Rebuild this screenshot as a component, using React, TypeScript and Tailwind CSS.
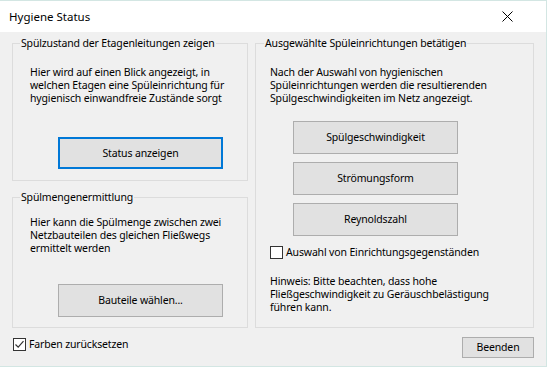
import React from "react";

const Btn = ({ label, focused, className }: { label: string; focused?: boolean; className?: string }) => (
  <button
    className={
      "flex items-center justify-center bg-[#e1e1e1] text-black " +
      (focused ? "border-2 border-[#0078d7] " : "border border-[#adadad] ") +
      (className ?? "")
    }
  >
    {label}
  </button>
);

const CheckBox = ({ checked, label }: { checked?: boolean; label: string }) => (
  <label className="flex items-center gap-[3px]">
    <span className="w-[13px] h-[13px] border border-[#333333] bg-white flex items-center justify-center">
      {checked && (
        <svg width="11" height="11" viewBox="0 0 11 11">
          <path d="M1.5 5.5 L4.2 8.2 L9.5 2.2" fill="none" stroke="#333333" strokeWidth="1.2" />
        </svg>
      )}
    </span>
    <span>{label}</span>
  </label>
);

export default function App() {
  return (
    <div
      className="w-[547px] h-[367px] flex flex-col border-t border-r border-b border-[#d3e6e3] text-[10.5px] leading-[13px] tracking-[-0.15px] text-black"
      style={{ fontFamily: '"Segoe UI", "Noto Sans", sans-serif' }}
    >
      {/* title bar */}
      <div className="h-[31px] bg-white flex items-center justify-between pl-[9px] pr-[33px] shrink-0">
        <span className="text-[11.5px] tracking-normal">Hygiene Status</span>
        <svg width="11" height="11" viewBox="0 0 11 11">
          <path d="M0.5 0.5 L10.5 10.5 M10.5 0.5 L0.5 10.5" stroke="#000" strokeWidth="1" />
        </svg>
      </div>

      <div className="flex-1 bg-[#f0f0f0] px-[12px] pt-[5px]">
        <div className="flex gap-[7px]">
          {/* left column */}
          <div className="w-[236px] flex flex-col gap-[10px]">
            <fieldset className="border border-[#dcdcdc] h-[144px] pl-[17px]">
              <legend className="ml-[-10px] px-[1px]">Spülzustand der Etagenleitungen zeigen</legend>
              <p className="mt-[16px]">
                Hier wird auf einen Blick angezeigt, in
                <br />
                welchen Etagen eine Spüleinrichtung für
                <br />
                hygienisch einwandfreie Zustände sorgt
              </p>
              <Btn label="Status anzeigen" focused className="mt-[32px] ml-[28px] w-[165px] h-[32px]" />
            </fieldset>

            <fieldset className="border border-[#dcdcdc] h-[137px] pl-[17px]">
              <legend className="ml-[-10px] px-[1px]">Spülmengenermittlung</legend>
              <p className="mt-[12px]">
                Hier kann die Spülmenge zwischen zwei
                <br />
                Netzbauteilen des gleichen Fließwegs
                <br />
                ermittelt werden
              </p>
              <Btn label="Bauteile wählen..." className="mt-[29px] ml-[28px] w-[165px] h-[33px]" />
            </fieldset>
          </div>

          {/* right column */}
          <fieldset className="w-[279px] h-[291px] border border-[#dcdcdc] pl-[14px]">
            <legend className="ml-[-6px] px-[1px]">Ausgewählte Spüleinrichtungen betätigen</legend>
            <p className="mt-[16px]">
              Nach der Auswahl von hygienischen
              <br />
              Spüleinrichtungen werden die resultierenden
              <br />
              Spülgeschwindigkeiten im Netz angezeigt.
            </p>
            <div className="mt-[16px] ml-[23px] flex flex-col gap-[8px]">
              <Btn label="Spülgeschwindigkeit" className="w-[165px] h-[33px]" />
              <Btn label="Strömungsform" className="w-[165px] h-[33px]" />
              <Btn label="Reynoldszahl" className="w-[165px] h-[33px]" />
            </div>
            <div className="mt-[10px]">
              <CheckBox label="Auswahl von Einrichtungsgegenständen" />
            </div>
            <p className="mt-[16px]">
              Hinweis: Bitte beachten, dass hohe
              <br />
              Fließgeschwindigkeit zu Geräuschbelästigung
              <br />
              führen kann.
            </p>
          </fieldset>
        </div>

        <div className="flex justify-between items-start mt-[9px]">
          <div className="pl-[1px] pt-[1px]">
            <CheckBox checked label="Farben zurücksetzen" />
          </div>
          <Btn label="Beenden" className="w-[72px] h-[21px]" />
        </div>
      </div>
    </div>
  );
}
